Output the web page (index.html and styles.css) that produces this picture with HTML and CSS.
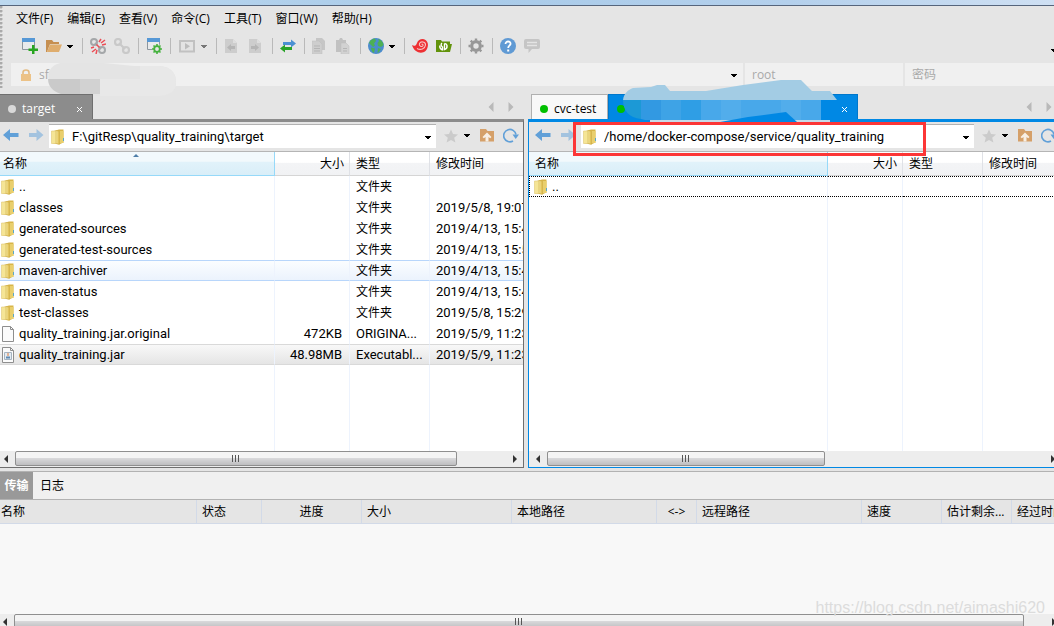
FILE: index.html
```html
<!DOCTYPE html>
<html lang="zh-CN">
<head>
<meta charset="utf-8">
<title>target</title>
<link rel="stylesheet" href="styles.css">
</head>
<body>
<svg class="defs" width="0" height="0" aria-hidden="true">
  <defs>
    <linearGradient id="gold" x1="0" x2="1" y1="0" y2="0"><stop offset="0" stop-color="#f9eca6"/><stop offset="1" stop-color="#d9b440"/></linearGradient>
    <symbol id="folder" viewBox="0 0 14 16">
      <path d="M1 2.500L8 .5h4.500v13L8 15.500 1 14z" fill="#d8b548"/>
      <path d="M8 2h4.500v12H8z" fill="#e9cf6d"/>
      <path d="M.5 2h5.500v12.500H.5z" fill="#f5e596" stroke="#e0c873" stroke-width=".6"/>
      <path d="M5 1.500l3.500.7v13L5 14.500z" fill="url(#gold)" stroke="#cfae4a" stroke-width=".6"/>
      <path d="M12 9h1v3h-1z" fill="#5aa7c8"/>
    </symbol>
    <symbol id="back" viewBox="0 0 16 16"><path d="M0 8l7-6v4h8.500v4H7v4z" fill="#61a0d8"/></symbol>
    <symbol id="forward" viewBox="0 0 16 16"><path d="M15.500 8l-7-6v4H1v4h7.500v4z" fill="#a3c3df"/></symbol>
    <symbol id="caret" viewBox="0 0 8 16"><path d="M1 7h6v1H6v1H5v1H3V9H2V8H1z" fill="currentColor"/></symbol>
    <symbol id="star" viewBox="0 0 14 14"><path d="M7 .5l2 4.600 5 .4-3.800 3.200 1.200 4.900L7 11l-4.400 2.600 1.200-4.900L0 5.500l5-.4z" fill="#cbcbcb"/></symbol>
    <symbol id="up" viewBox="0 0 16 14"><path d="M1 1h6l1.500 2H15v10.500H1z" fill="#d5a069"/><path d="M8 4.500L12.500 9l-1.300 1.300L9.500 9v4.500h-3V9l-1.700 1.300L3.500 9z" fill="#f8efe4"/></symbol>
    <symbol id="refresh" viewBox="0 0 16 16"><path d="M10 14A6.200 6.200 0 1 1 13 7.500" fill="none" stroke="#61a0d8" stroke-width="1.600"/><path d="M9.500 7.500h6.500L12.700 12z" fill="#61a0d8"/></symbol>
    <symbol id="navleft" viewBox="0 0 6 10"><path d="M5.500 0v10L.5 5z" fill="#b9b9b9"/></symbol>
    <symbol id="navright" viewBox="0 0 6 10"><path d="M.5 0v10l5-5z" fill="#b9b9b9"/></symbol>
    <symbol id="sbleft" viewBox="0 0 4 8"><path d="M4 0v8L0 4z" fill="#333"/></symbol>
    <symbol id="sbright" viewBox="0 0 4 8"><path d="M0 0v8l4-4z" fill="#333"/></symbol>
  </defs>
</svg>

<div class="titlebar"></div>
<header class="top">
  <div class="grip"></div>
  <div class="bars">
    <nav class="menu">
      <button>文件(F)</button><button>编辑(E)</button><button>查看(V)</button><button>命令(C)</button><button>工具(T)</button><button>窗口(W)</button><button>帮助(H)</button>
    </nav>
    <div class="toolbar">
      <button class="ico" aria-label="新建"><svg viewBox="0 0 16 16"><path d="M.5.500h12v11H.5z" fill="#e8eaec" stroke="#8c969e"/><path d="M0 0h13v4H0z" fill="#5698d6"/><path d="M10 7h2.500v3.500H16V13h-3.500v3H10v-3H6.500v-2.500H10z" fill="#28a521"/></svg></button>
      <button class="ico" aria-label="打开"><svg viewBox="0 0 16 16"><path d="M0 2h6l1.500 2H13v2H4L1 14H0z" fill="#c68f50"/><path d="M4 6.500h12L13 14H1z" fill="#dfad6d"/></svg></button>
      <button class="car" aria-label="打开列表"><svg><use href="#caret"/></svg></button>
      <i class="sep"></i>
      <button class="ico" aria-label="断开"><svg viewBox="0 0 16 16"><g fill="none" stroke="#a4a7a9" stroke-width="2"><circle cx="4" cy="4" r="3"/><circle cx="12" cy="12" r="3"/><path d="M5 5l2 2M9 9l2 2"/></g><path d="M9 4l2-3M11 5l4-3M12 7l4-1M1 10l3-1M2 14l4-3M6 16l1-4M6.500 6.500l3 3" stroke="#eb4d55" stroke-width="1.500"/></svg></button>
      <button class="ico" aria-label="重新连接"><svg viewBox="0 0 16 16"><g fill="none" stroke="#c9c9c9" stroke-width="2.200"><circle cx="4" cy="4" r="3"/><circle cx="12" cy="12" r="3"/><path d="M5 5l6 6"/></g></svg></button>
      <i class="sep"></i>
      <button class="ico" aria-label="会话属性"><svg viewBox="0 0 16 16"><path d="M1.500.500h12v11h-12z" fill="#e8eaec" stroke="#8c969e"/><path d="M1 0h13v4H1z" fill="#5698d6"/><circle cx="11" cy="11" r="5" fill="#e5e5e5"/><circle cx="11" cy="11" r="2.800" fill="none" stroke="#45b23e" stroke-width="1.800"/><path d="M11 6v2M11 14v2M6 11h2M14 11h2M7.500 7.500l1.300 1.300M13.200 13.200l1.300 1.300M14.500 7.500l-1.300 1.300M8.800 13.200l-1.300 1.300" stroke="#45b23e" stroke-width="1.600"/></svg></button>
      <i class="sep"></i>
      <button class="ico wide" aria-label="运行"><svg viewBox="0 0 18 16"><path d="M2 3h14v10.500H2z" fill="#e3e3e3" stroke="#c1c1c1" stroke-width="2"/><path d="M7 5l5 3.200-5 3.200z" fill="#bcbcbc"/></svg></button>
      <button class="car dim" aria-label="运行列表"><svg><use href="#caret"/></svg></button>
      <i class="sep"></i>
      <button class="ico" aria-label="向左传输"><svg viewBox="0 0 16 16"><path d="M1 1h8l4 4v10H1z" fill="#cdcdcd"/><path d="M9 1v4h4z" fill="#dedede"/><path d="M3 9.500L7 6v2h4v3H7v2z" fill="#b5b5b5"/></svg></button>
      <button class="ico" aria-label="向右传输"><svg viewBox="0 0 16 16"><path d="M1 1h8l4 4v10H1z" fill="#cdcdcd"/><path d="M9 1v4h4z" fill="#dedede"/><path d="M11 9.500L7 6v2H3v3h4v2z" fill="#b5b5b5"/></svg></button>
      <i class="sep"></i>
      <button class="ico" aria-label="同步"><svg viewBox="0 0 16 16"><path d="M3 4h8V1.500L16 5.500l-5 4V7H3z" fill="#4b90d2"/><path d="M12 9H5V6.500L0 10.500l5 4V12h7z" fill="#2aa329"/></svg></button>
      <i class="sep"></i>
      <button class="ico" aria-label="复制"><svg viewBox="0 0 16 16"><path d="M4 0h6l3 3v9H4z" fill="#c6c6c6"/><path d="M0 3h7l3 3v10H0z" fill="#cecece" stroke="#bdbdbd" stroke-width=".5"/><path d="M2 8h6M2 10.500h6M2 13h6" stroke="#b5b5b5"/></svg></button>
      <button class="ico" aria-label="粘贴"><svg viewBox="0 0 16 16"><path d="M0 2h3l1-2h2l1 2h3v12H0z" fill="#c1c1c1"/><path d="M5 5h5l3 3v8H5z" fill="#d2d2d2" stroke="#bdbdbd" stroke-width=".5"/><path d="M7 10.500h4M7 13h4" stroke="#b5b5b5"/></svg></button>
      <i class="sep"></i>
      <button class="ico" aria-label="浏览器"><svg viewBox="0 0 16 16"><circle cx="8" cy="8" r="8" fill="#4b8ccd"/><path d="M1 5c1-3 4-4.500 6-4.500L8 3 6 5.500l1 2L5 9 3 7zM3 9.500l4 1-1 4.500c-2-1-3-3-3-5.500zM10 1c3 .5 5 3 5.500 6L13 9l-3-1-.5-3L11 3zM10 10l3 1-2 3-1.500 1z" fill="#4db054"/></svg></button>
      <button class="car" aria-label="浏览器列表"><svg><use href="#caret"/></svg></button>
      <i class="sep"></i>
      <button class="ico" aria-label="Xshell"><svg viewBox="0 0 16 16"><path d="M0 7c2 1.500 4 1 5-2 1.200-3.500 5.500-5 8.500-3 3.500 2.500 3 8 0 11C9.500 16.500 2 14.500 0 7z" fill="#ee3033"/><path d="M5 10.500c3.500 2 8 .5 8.500-3.500.3-3-4.500-4.500-6-1.500-1 2.500 2.500 4 3.500 2 .4-1-.8-1.700-1.400-1" fill="none" stroke="#f6c6c4" stroke-width="1.100"/></svg></button>
      <button class="ico" aria-label="Xftp"><svg viewBox="0 0 16 16"><path d="M0 2h5l1 1.500h8V6h2l-2 8H0z" fill="#62930b"/><path d="M6.500 12.500v-3.500q-2.500-2-.5-4M8.500 5.500v6q3-1 2.500-4-.5-2-2.500-2M3.800 7.500q-.5 3 2.700 4.500" fill="none" stroke="#fff" stroke-width="1.400"/></svg></button>
      <i class="sep"></i>
      <button class="ico" aria-label="选项"><svg viewBox="0 0 16 16"><circle cx="8" cy="8" r="4.300" fill="none" stroke="#979797" stroke-width="3.200"/><path d="M8 .5v2M8 13.500v2M.5 8h2M13.500 8h2M2.700 2.700l1.500 1.500M11.800 11.800l1.500 1.500M13.300 2.700l-1.500 1.500M4.200 11.800l-1.500 1.500" stroke="#979797" stroke-width="2.400"/></svg></button>
      <i class="sep"></i>
      <button class="ico" aria-label="帮助"><svg viewBox="0 0 16 16"><circle cx="8" cy="8" r="8" fill="#609ad4"/><path d="M5.500 6c0-3.500 5.500-3.200 5 0-.3 1.800-2.300 1.700-2.300 4" fill="none" stroke="#fff" stroke-width="1.800"/><path d="M7.200 11.500h2v2h-2z" fill="#fff"/></svg></button>
      <button class="ico" aria-label="反馈"><svg viewBox="0 0 16 16"><path d="M2 1h12q2 0 2 2v6q0 2-2 2H8l-3.500 4v-4H2q-2 0-2-2V3q0-2 2-2z" fill="#c5c5c5"/><path d="M3 4.500h10M3 7.500h10" stroke="#e4e4e4" stroke-width="1.300"/></svg></button>
      <button class="car more" aria-label="更多"><svg><use href="#caret"/></svg></button>
    </div>
    <div class="address">
      <div class="host">
        <svg class="lock" viewBox="0 0 12 12"><path d="M3 6V3.500q0-2.500 3-2.500t3 2.500V6" fill="none" stroke="#e4bb82" stroke-width="1.600"/><path d="M1 5h10v7H1z" fill="#ecc287"/></svg>
        <input aria-label="主机" value="sftp">
        <button class="car" aria-label="主机列表"><svg><use href="#caret"/></svg></button>
        <svg class="smudge" viewBox="0 0 128 34" aria-hidden="true"><path d="M12 0h44l30 3h26c12 1 16 8 16 16s-4 14-20 14H50L14 32C-4 24-4 4 12 0z" fill="#e4e4e4"/><path d="M0 16h32v16H18C8 31 0 25 0 16z" fill="#cacaca"/><path d="M32 16h20v15H32z" fill="#d2d2d2"/><path d="M92 3h20c12 1 16 8 16 16s-4 14-20 14H52V16h40z" fill="#e8e8e8"/></svg>
      </div>
      <input class="cred" aria-label="用户名" value="root">
      <input class="cred" type="password" aria-label="密码" placeholder="密码">
    </div>
  </div>
</header>

<main class="work">
  <section class="pane local">
    <div class="tabs">
      <button class="tab on"><i class="dot"></i><span>target</span><svg class="x" viewBox="0 0 7 7"><path d="M1 1l5 5M6 1L1 6" stroke="#fff"/></svg></button>
      <div class="nav"><svg><use href="#navleft"/></svg><svg><use href="#navright"/></svg></div>
    </div>
    <div class="frame">
      <div class="path">
        <button class="ico" aria-label="后退"><svg><use href="#back"/></svg></button>
        <button class="ico fwd" aria-label="前进"><svg><use href="#forward"/></svg></button>
        <div class="combo"><svg class="fold"><use href="#folder"/></svg><input aria-label="本地路径" value="F:\gitResp\quality_training\target"><button class="car" aria-label="路径列表"><svg><use href="#caret"/></svg></button></div>
        <button class="ico star" aria-label="收藏"><svg><use href="#star"/></svg></button>
        <button class="car" aria-label="收藏列表"><svg><use href="#caret"/></svg></button>
        <button class="ico" aria-label="上一级"><svg><use href="#up"/></svg></button>
        <button class="ico" aria-label="刷新"><svg><use href="#refresh"/></svg></button>
      </div>
      <div class="list">
        <table>
          <colgroup><col class="name"><col class="size"><col class="type"><col></colgroup>
          <thead><tr><th class="sorted">名称<svg class="asc" viewBox="0 0 6 3"><path d="M0 3l3-3 3 3z" fill="#4e7ea8"/></svg></th><th class="r">大小</th><th>类型</th><th>修改时间</th></tr></thead>
          <tbody>
            <tr><td><svg class="fold"><use href="#folder"/></svg>..</td><td></td><td class="cjk">文件夹</td><td></td></tr>
            <tr><td><svg class="fold"><use href="#folder"/></svg>classes</td><td></td><td class="cjk">文件夹</td><td>2019/5/8, 19:07</td></tr>
            <tr><td><svg class="fold"><use href="#folder"/></svg>generated-sources</td><td></td><td class="cjk">文件夹</td><td>2019/4/13, 15:4</td></tr>
            <tr><td><svg class="fold"><use href="#folder"/></svg>generated-test-sources</td><td></td><td class="cjk">文件夹</td><td>2019/4/13, 15:5</td></tr>
            <tr class="hover"><td><svg class="fold"><use href="#folder"/></svg>maven-archiver</td><td></td><td class="cjk">文件夹</td><td>2019/4/13, 15:4</td></tr>
            <tr><td><svg class="fold"><use href="#folder"/></svg>maven-status</td><td></td><td class="cjk">文件夹</td><td>2019/4/13, 15:4</td></tr>
            <tr><td><svg class="fold"><use href="#folder"/></svg>test-classes</td><td></td><td class="cjk">文件夹</td><td>2019/5/8, 15:29</td></tr>
            <tr><td><svg class="fold" viewBox="0 0 14 16"><path d="M1.500.500h8l3 3v12h-11z" fill="#fbfbfb" stroke="#8e8e8e"/><path d="M9.500.500v3h3" fill="none" stroke="#8e8e8e"/></svg>quality_training.jar.original</td><td class="r">472KB</td><td>ORIGINA...</td><td>2019/5/9, 11:23</td></tr>
            <tr class="selected"><td><svg class="fold" viewBox="0 0 14 16"><path d="M1.500.500h8l3 3v12h-11z" fill="#fbfbfb" stroke="#8e8e8e"/><path d="M9.500.500v3h3" fill="none" stroke="#8e8e8e"/><path d="M3.500 5.500h7v7h-7z" fill="#e3ebf2" stroke="#a5b3c0"/><path d="M5 9.500h4v2H5z" fill="#5f8ab3"/><path d="M7 6v3" stroke="#e07a3a"/></svg>quality_training.jar</td><td class="r">48.98MB</td><td>Executabl...</td><td>2019/5/9, 11:23</td></tr>
            <tr class="fill"><td></td><td></td><td></td><td></td></tr>
          </tbody>
        </table>
      </div>
      <div class="scroll"><button aria-label="向左滚动"><svg><use href="#sbleft"/></svg></button><div class="track"><div class="thumb"></div></div><button aria-label="向右滚动"><svg><use href="#sbright"/></svg></button></div>
    </div>
  </section>

  <section class="pane remote">
    <div class="tabs">
      <button class="tab"><i class="dot"></i><span>cvc-test</span></button>
      <button class="tab on" aria-label="远程会话"><i class="dot"></i><span></span><svg class="x" viewBox="0 0 7 7"><path d="M1 1l5 5M6 1L1 6" stroke="#fff"/></svg>
        <svg class="smudge" viewBox="0 0 214 42" aria-hidden="true"><path d="M0 20C1 13 5 10 10 8l18-1 6-2h8l5 6h36L120 5 158 0h20l11 11h18l7 9z" fill="#a3cce4"/><path d="M0 20h18v19C6 38 0 30 0 20z" fill="#1c99d6"/><path d="M18 20h20v20H22l-4-1z" fill="#3299e2"/><path d="M38 20h20v20H38z" fill="#3ea3e6"/><path d="M58 20h20v20H58z" fill="#2f9ee5"/><path d="M78 20h120v20H78z" fill="#48a8ea"/><path d="M98 20h20v20H98zM158 20h20v20h-20z" fill="#52adeb"/><path d="M27 40h180v2H27z" fill="#c7dae7"/><path d="M97 42l28-5 38-5 11 10z" fill="#0088e4"/></svg>
      </button>
      <div class="nav"><svg><use href="#navleft"/></svg><svg><use href="#navright"/></svg></div>
    </div>
    <div class="frame">
      <div class="path">
        <button class="ico" aria-label="后退"><svg><use href="#back"/></svg></button>
        <button class="ico fwd" aria-label="前进"><svg><use href="#forward"/></svg></button>
        <div class="combo"><svg class="fold"><use href="#folder"/></svg><input aria-label="远程路径" value="/home/docker-compose/service/quality_training"><button class="car" aria-label="路径列表"><svg><use href="#caret"/></svg></button></div>
        <button class="ico star" aria-label="收藏"><svg><use href="#star"/></svg></button>
        <button class="car" aria-label="收藏列表"><svg><use href="#caret"/></svg></button>
        <button class="ico" aria-label="上一级"><svg><use href="#up"/></svg></button>
        <button class="ico" aria-label="刷新"><svg><use href="#refresh"/></svg></button>
        <div class="mark"></div>
      </div>
      <div class="list">
        <table>
          <colgroup><col class="name"><col class="size"><col class="type"><col></colgroup>
          <thead><tr><th class="sorted">名称</th><th class="r">大小</th><th>类型</th><th>修改时间</th></tr></thead>
          <tbody>
            <tr class="focus"><td><svg class="fold"><use href="#folder"/></svg>..</td><td></td><td></td><td></td></tr>
            <tr class="fill"><td></td><td></td><td></td><td></td></tr>
          </tbody>
        </table>
      </div>
      <div class="scroll"><button aria-label="向左滚动"><svg><use href="#sbleft"/></svg></button><div class="track"><div class="thumb"></div></div><button aria-label="向右滚动"><svg><use href="#sbright"/></svg></button></div>
    </div>
  </section>
</main>

<section class="transfer">
  <div class="switch"><button class="on">传输</button><button>日志</button></div>
  <table class="queue">
    <colgroup><col class="w200"><col class="w65"><col class="w100"><col class="w150"><col class="w145"><col class="w40"><col class="w165"><col class="w80"><col class="w70"><col></colgroup>
    <thead><tr><th>名称</th><th>状态</th><th class="c">进度</th><th>大小</th><th>本地路径</th><th class="c">&lt;-&gt;</th><th>远程路径</th><th>速度</th><th>估计剩余...</th><th>经过时间</th></tr></thead>
  </table>
  <div class="blank"><span class="watermark">https://blog.csdn.net/aimashi620</span></div>
  <div class="scroll"><button aria-label="向左滚动"><svg><use href="#sbleft"/></svg></button><div class="track"><div class="thumb"></div></div><button aria-label="向右滚动"><svg><use href="#sbright"/></svg></button></div>
</section>
</body>
</html>
```
FILE: styles.css
```css
* { box-sizing: border-box; }
html { height: 100%; overflow: hidden; }
body {
  margin: 0;
  height: calc(100% + 4px);
  display: flex;
  flex-direction: column;
  overflow: hidden;
  background: #e5e5e5;
  color: #000;
  font: 12px/16px "Open Sans", "Noto Sans CJK SC", sans-serif;
}
button, input { font: inherit; color: inherit; background: none; border: 0; padding: 0; margin: 0; }
button { flex: none; }
input { min-width: 0; outline: 0; }
svg { display: block; }
i { font-style: normal; }
.defs { position: absolute; }

.titlebar {
  flex: none;
  height: 6px;
  background: linear-gradient(90deg, #bcd8ef, #a9cbe9 45%, #b4d0ec 75%, #cfe0f3);
  border-bottom: 1px solid #56657c;
}
.top { flex: none; display: flex; height: 88px; }
.grip {
  flex: none;
  width: 4px;
  margin-bottom: 6px;
  background: radial-gradient(circle at 1px 1px, #aaa 1px, transparent 2px) 0 0 / 4px 4px;
}
.bars { flex: 1; min-width: 0; display: flex; flex-direction: column; }
.menu { display: flex; gap: 14px; height: 26px; padding-left: 12px; align-items: center; }
.toolbar { display: flex; gap: 8px; height: 31px; padding: 0 0 3px 18px; align-items: center; }
.ico { width: 16px; height: 16px; }
.ico svg { width: 100%; height: 16px; }
.wide { width: 18px; }
.car { width: 8px; height: 16px; }
.car svg { width: 8px; height: 16px; }
.toolbar .car { margin-left: -4px; }
.toolbar .more { margin: 8px -4px 0 auto; }
.dim { color: #777; }
.sep { width: 1px; height: 16px; margin-right: -1px; background: #b9b9b9; }
.address { display: grid; grid-template-columns: 732fr 158fr 149fr; gap: 2px; height: 23px; padding-left: 7px; color: #a9a9a9; }
.host { position: relative; min-width: 0; display: flex; align-items: center; padding: 0 5px 0 9px; background: #f0f0f0; }
.host input { flex: 1; padding-left: 7px; }
.host .car { color: #000; }
.lock { width: 12px; height: 12px; }
.host .smudge { position: absolute; left: 37px; top: 0; width: 128px; height: 34px; }
.cred { width: 100%; background: #f0f0f0; padding-left: 7px; }
.cred::placeholder { color: #a9a9a9; opacity: 1; }

.work { flex: 1; min-height: 0; display: flex; gap: 4px; margin: 0 -8px 0 -4px; }
.pane { min-width: 0; display: flex; flex-direction: column; --accent: #8c8c8c; --edge: #6f6f6f; }
.local { flex: 528; }
.remote { flex: 534; --accent: #0088e4; --edge: #0077cb; }
.tabs { flex: none; display: flex; height: 25px; padding-left: 3px; }
.tab { position: relative; display: flex; align-items: center; gap: 6px; padding: 3px 8px 0 8px; }
.tab.on { background: var(--accent); border: 1px solid var(--edge); border-bottom: 0; color: #fff; }
.tab:not(.on) { width: 77px; background: #f8f8f8; border: 1px solid #b0b0b0; border-bottom: 0; }
.local .tab.on { width: 94px; }
.remote .tab.on { width: 250px; }
.tab span { flex: 1; text-align: left; }
.x { width: 7px; height: 7px; margin: 1px 1px 0 0; }
.dot { width: 8px; height: 8px; border-radius: 4px; background: #00bf00; }
.local .dot { background: #d9d9d9; }
.tab .smudge { position: absolute; z-index: 1; left: 14px; top: -15px; width: 214px; height: 42px; }
.nav { margin-left: auto; display: flex; gap: 14px; align-items: center; padding-right: 10px; }
.nav svg { width: 6px; height: 10px; }
.frame {
  flex: 1;
  min-height: 0;
  display: flex;
  flex-direction: column;
  border: 1px solid var(--edge);
  border-top: 3px solid var(--accent);
  background: #fff;
}
.remote .frame { border-color: #0088e4; }
.path {
  position: relative;
  flex: none;
  display: flex;
  align-items: center;
  height: 30px;
  padding: 0 4px 3px 6px;
  background: #e5e5e5;
  border-bottom: 1px solid #b5b5b5;
}
.fwd { margin: 0 5px 0 9px; }
.combo { flex: 1; min-width: 0; display: flex; align-items: center; height: 24px; margin-top: 2px; padding: 0 4px 0 2px; background: #fff; border-top: 1px solid #b2b2b2; }
.combo input { flex: 1; font-family: Roboto, "Noto Sans CJK SC", sans-serif; font-size: 13px; padding-left: 7px; }
.fold { flex: none; width: 14px; height: 16px; }
.path .star { width: 14px; margin: 0 5px 0 8px; }
.path .star svg { height: 14px; margin-top: 1px; }
.path .car + .ico { margin: 0 8px; }
.mark { position: absolute; z-index: 2; left: 44px; top: 0; width: 353px; height: 34px; border: 3px solid #fc3636; }

.list { flex: 1; min-height: 0; overflow: hidden; }
table { width: 100%; table-layout: fixed; border-collapse: separate; border-spacing: 0; }
.list table { height: 100%; }
.name { width: 278px; }
.remote .name { width: 299px; }
.size { width: 75px; }
.type { width: 80px; }
th { font-weight: normal; text-align: left; padding: 0 0 0 6px; white-space: nowrap; overflow: hidden; }
.list th {
  position: relative;
  height: 24px;
  background: linear-gradient(#fff 45%, #f3f4f6 50%, #f1f2f4);
  border-right: 1px solid #dfe1e6;
  border-bottom: 1px solid #d5d5d5;
}
.list th.sorted { background: linear-gradient(#f2f9fc 40%, #e1f2fa 45%, #d9eef8); border-color: #96d9f9; }
.list th.r { padding-right: 5px; }
.asc { position: absolute; left: 49%; top: 2px; width: 6px; height: 3px; }
.r { text-align: right; }
td { height: 21px; padding: 0 0 0 6px; font-family: Roboto, "Noto Sans CJK SC", sans-serif; font-size: 13px; white-space: nowrap; overflow: hidden; border-right: 1px solid #edf3fd; }
td:last-child, .list th:last-child { border-right: 0; }
td.r { padding-right: 7px; }
td:first-child { padding-left: 4px; }
td .fold { display: inline-block; vertical-align: top; margin-right: 4px; }
td.cjk { font-size: 12px; }
.fill td { height: auto; }
.hover td { background: linear-gradient(#fbfdff, #ebf3fd); border-top: 1px solid #b8d6fb; border-bottom: 1px solid #b8d6fb; }
.selected td { background: linear-gradient(#f8f8f8, #e5e5e5); border-top: 1px solid #d9d9d9; border-bottom: 1px solid #d9d9d9; }
.focus td { border-top: 1px dotted #000; border-bottom: 1px dotted #000; }
.focus td:first-child { border-left: 1px dotted #000; }

.scroll { flex: none; display: flex; height: 16px; background: #ededed; }
.scroll button { width: 17px; display: flex; align-items: center; justify-content: center; }
.scroll button svg { width: 4px; height: 8px; }
.track { flex: 1; padding-left: 1px; }
.thumb {
  height: 15px;
  width: 90%;
  border: 1px solid #8f8f8f;
  border-radius: 2px;
  background:
    repeating-linear-gradient(90deg, #555 0 1px, transparent 1px 3px) center / 8px 7px no-repeat,
    linear-gradient(#f4f4f4 45%, #d8d8da 50%, #bebec0);
}
.remote .thumb { width: 56%; }
.transfer .thumb { width: 98%; }

.transfer { flex: none; display: flex; flex-direction: column; height: 159px; margin: 3px -8px 0 -4px; background: #f8f8f8; border-top: 1px solid #b2b2b2; }
.switch { flex: none; display: flex; height: 28px; padding-left: 4px; background: #f0f0f0; border-bottom: 1px solid #b2b2b2; }
.switch button { padding: 0 7px; }
.switch .on { padding: 0 3px; width: 33px; background: #999; color: #fff; font-weight: bold; }
.queue { flex: none; }
.queue th { height: 24px; padding-left: 5px; background: #e5e5e5; border-right: 1px solid #d2dae8; border-bottom: 1px solid #d2dae8; }
.queue th.c { text-align: center; padding: 0; }
.w200 { width: 201px; }
.w65 { width: 65px; }
.w100 { width: 100px; }
.w150 { width: 150px; }
.w145 { width: 145px; }
.w40 { width: 40px; }
.w165 { width: 165px; }
.w80 { width: 80px; }
.w70 { width: 70px; }
.blank { flex: 1; display: flex; align-items: flex-end; justify-content: flex-end; padding-right: 17px; }
.watermark { position: relative; z-index: 1; font: 16px/20px "Liberation Sans", sans-serif; color: #dcdcdc; margin-bottom: -4px; }
```
